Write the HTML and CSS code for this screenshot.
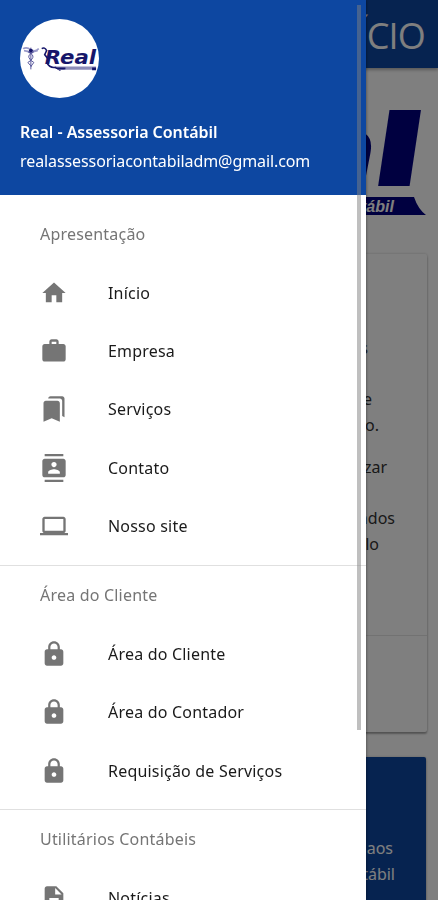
FILE: index.html
```html
<!DOCTYPE html>
<html lang="pt-BR">
<head>
  <meta charset="UTF-8">
  <meta name="viewport" content="width=device-width, initial-scale=1.0">
  <title>Real - Assessoria Contábil</title>
  <link rel="stylesheet" href="styles.css">
</head>
<body>
  <nav class="topbar"><span class="page-title">INÍCIO</span></nav>

  <main class="page">
    <svg class="logo" viewBox="0 0 120 110">
      <text class="logo-name" x="3" y="78">a</text>
      <text class="logo-name-l" transform="translate(56 78) skewX(-8.500) scale(1.800 1)">l</text>
      <path d="M0 89h107q4 12 12 18H0z" fill="#000080"/>
      <text class="logo-sub" x="54" y="104" textLength="33" lengthAdjust="spacingAndGlyphs">tábil</text>
    </svg>

    <section class="card">
      <div class="card-text">
        <p class="end-xl">s</p>
        <p class="gap end-lg">e</p>
        <p class="end-md">o.</p>
        <p class="para end-sm">zar</p>
        <p class="gap">ados</p>
        <p class="end-md">lo</p>
      </div>
      <div class="card-action"></div>
    </section>

    <section class="card card-blue">
      <p class="end-aos">aos</p>
      <p>tábil</p>
    </section>
  </main>

  <div class="sidenav-overlay"></div>

  <aside class="sidenav">
    <header class="user-view">
      <svg class="avatar" viewBox="0 0 80 80">
        <circle cx="40" cy="40" r="40" fill="#fff"/>
        <g fill="none" stroke="#55559a" stroke-width="1">
          <path d="M3 30q4-2 8 1t8-1M4 32q4 0 7 3M18 32q-4 0-7 3" stroke-width="1.6" stroke="#9a9ac8"/>
          <path d="M11 29v22M8 33q6 3 5 6t-5 5q2 3 4 4M14 33q-6 3-5 6t5 5q-2 3-3 4"/>
          <path d="M22 30q3-2 5 2l-2 4 3 4M27 44q3 6 9 5l5 3" stroke="#16166a" stroke-width="1.600"/>
        </g>
        <circle cx="11" cy="32" r="2" fill="#16166a"/>
        <text class="avatar-name" x="25" y="46" textLength="52" lengthAdjust="spacingAndGlyphs">Real</text>
        <path d="M36 48h41v3.500H39z" fill="#8c8cb8"/>
        <path d="M34 49q5 3 12 2v-2zM73 49h4v3h-4z" fill="#16166a"/>
      </svg>
      <strong class="name">Real - Assessoria Contábil</strong>
      <span class="email">realassessoriacontabiladm@gmail.com</span>
    </header>

    <ul class="menu">
      <li class="subheader">Apresentação</li>
      <li class="item"><svg viewBox="0 0 24 24"><path d="M10 20v-6h4v6h5v-8h3L12 3 2 12h3v8z"/></svg><span>Início</span></li>
      <li class="item"><svg viewBox="0 0 24 24"><path d="M20 6h-4V4c0-1.110-.89-2-2-2h-4c-1.110 0-2 .89-2 2v2H4c-1.110 0-2 .89-2 2v11c0 1.110.89 2 2 2h16c1.110 0 2-.89 2-2V8c0-1.110-.89-2-2-2zm-6 0h-4V4h4v2z"/></svg><span>Empresa</span></li>
      <li class="item"><svg viewBox="0 0 24 24"><path d="M19 18l2 1V3c0-1.100-.9-2-2-2H8.990C7.890 1 7 1.900 7 3h10c1.100 0 2 .9 2 2v13zM15 5H5c-1.100 0-2 .9-2 2v16l7-3 7 3V7c0-1.100-.9-2-2-2z"/></svg><span>Serviços</span></li>
      <li class="item"><svg viewBox="0 0 24 24"><path d="M20 0H4v2h16V0zM4 24h16v-2H4v2zM20 4H4c-1.100 0-2 .9-2 2v12c0 1.100.9 2 2 2h16c1.100 0 2-.9 2-2V6c0-1.100-.9-2-2-2zm-8 2.750c1.240 0 2.250 1.010 2.250 2.250s-1.010 2.250-2.250 2.250S9.750 10.240 9.750 9 10.760 6.750 12 6.750zM17 17H7v-1.500c0-1.670 3.330-2.500 5-2.500s5 .83 5 2.500V17z"/></svg><span>Contato</span></li>
      <li class="item"><svg viewBox="0 0 24 24"><path d="M20 18c1.100 0 2-.9 2-2V6c0-1.100-.9-2-2-2H4c-1.100 0-2 .9-2 2v10c0 1.100.9 2 2 2H0v2h24v-2h-4zM4 6h16v10H4V6z"/></svg><span>Nosso site</span></li>
      <li class="divider"></li>
      <li class="subheader">Área do Cliente</li>
      <li class="item"><svg viewBox="0 0 24 24"><use href="#lock"/></svg><span>Área do Cliente</span></li>
      <li class="item"><svg viewBox="0 0 24 24"><use href="#lock"/></svg><span>Área do Contador</span></li>
      <li class="item"><svg viewBox="0 0 24 24"><path id="lock" d="M18 8h-1V6c0-2.760-2.240-5-5-5S7 3.240 7 6v2H6c-1.100 0-2 .9-2 2v10c0 1.100.9 2 2 2h12c1.100 0 2-.9 2-2V10c0-1.100-.9-2-2-2zm-6 9c-1.100 0-2-.9-2-2s.9-2 2-2 2 .9 2 2-.9 2-2 2zm3.100-9H8.900V6c0-1.710 1.390-3.100 3.100-3.100s3.100 1.390 3.100 3.100v2z"/></svg><span>Requisição de Serviços</span></li>
      <li class="divider"></li>
      <li class="subheader">Utilitários Contábeis</li>
      <li class="item"><svg viewBox="0 0 24 24"><path d="M14 2H6c-1.100 0-2 .9-2 2v16c0 1.100.89 2 2 2h12c1.100 0 2-.9 2-2V8l-6-6zm2 16H8v-2h8v2zm0-4H8v-2h8v2zm-3-5V3.500L18.500 9H13z"/></svg><span>Notícias</span></li>
    </ul>
    <div class="scrollbar"></div>
  </aside>
</body>
</html>
```

FILE: styles.css
```css
* {
  box-sizing: border-box;
}
body {
  margin: 0;
  height: 900px;
  overflow: hidden;
  background: #fff;
  font-family: "Noto Sans", "Open Sans", sans-serif;
  font-size: 16px;
}
p, ul {
  margin: 0;
  padding: 0;
  list-style: none;
}

/* page behind the menu */
.topbar {
  display: flex;
  align-items: center;
  justify-content: flex-end;
  height: 68px;
  padding: 3px 13px 0 0;
  background: #0d47a1;
  box-shadow: 0 2px 3px rgba(0, 0, 0, 0.3);
  color: #fff;
}
.page-title {
  font-family: "Open Sans", sans-serif;
  font-size: 36px;
  font-weight: 400;
  letter-spacing: -0.8px;
}
.page {
  height: 832px;
  padding: 40px 11px 0;
  overflow: hidden;
}
.logo {
  display: block;
  width: 120px;
  height: 110px;
  margin: 0 0 36px auto;
}
.logo-name {
  font: italic bold 100px "DejaVu Sans", sans-serif;
  fill: #000080;
}
.logo-name-l {
  font: bold 100px "DejaVu Sans", sans-serif;
  fill: #000080;
}
.logo-sub {
  font: italic bold 16px "Liberation Sans", sans-serif;
  fill: #fff;
}
.card {
  display: flex;
  flex-direction: column;
  height: 478px;
  margin-bottom: 25px;
  border-radius: 2px;
  box-shadow: 0 2px 2px rgba(0, 0, 0, 0.3), 0 0 3px rgba(0, 0, 0, 0.2);
  line-height: 25.5px;
  text-align: right;
  color: #333;
}
.card-text {
  flex: 1;
  padding: 82px 32px 0 0;
}
.gap {
  margin-top: 25.5px;
}
.para {
  margin-top: 17px;
}
.end-xl { padding-right: 27px; }
.end-lg { padding-right: 23px; }
.end-md { padding-right: 16px; }
.end-sm { padding-right: 8px; }
.end-aos { padding-right: 2px; }
.card-action {
  height: 97px;
  border-top: 1px solid rgba(0, 0, 0, 0.1);
}
.card-blue {
  margin-right: 1px;
  padding: 79px 31px 0 0;
  background: #0d47a1;
  color: #fff;
}
.sidenav-overlay {
  position: fixed;
  inset: 0;
  background: rgba(0, 0, 0, 0.5);
}

/* menu */
.sidenav {
  position: fixed;
  top: 0;
  left: 0;
  width: 365.5px;
  height: 900px;
  overflow: hidden;
  background: #fff;
  box-shadow: 0 0 3px rgba(0, 0, 0, 0.5);
}
.user-view {
  display: flex;
  flex-direction: column;
  height: 194.5px;
  padding: 19px 20px 0;
  background: #0d47a1;
  color: #fff;
  line-height: 29px;
}
.avatar {
  width: 79px;
  height: 79px;
  margin-bottom: 20px;
}
.avatar-name {
  font: italic bold 19px "DejaVu Sans", sans-serif;
  fill: #16166a;
}
.name {
  font-size: 16px;
  font-weight: 600;
  letter-spacing: -0.05px;
}
.email {
  font-size: 16px;
  letter-spacing: -0.09px;
}
.menu {
  padding-top: 10px;
}
.subheader {
  height: 58.4px;
  padding-left: 40px;
  line-height: 59px;
  letter-spacing: 0.2px;
  color: #757575;
}
.item {
  display: flex;
  align-items: center;
  height: 58.4px;
  padding: 1px 0 0 40px;
  color: #1a1a1a;
  font-weight: 450;
  letter-spacing: 0.2px;
}
.item svg {
  width: 28px;
  height: 28px;
  margin-right: 40px;
  fill: #757575;
}
.divider {
  height: 1px;
  margin: 10px 0 0;
  background: #e0e0e0;
}
.scrollbar {
  position: absolute;
  top: 5px;
  right: 4.5px;
  width: 4px;
  height: 725px;
  background: rgba(128, 128, 128, 0.5);
}
```
